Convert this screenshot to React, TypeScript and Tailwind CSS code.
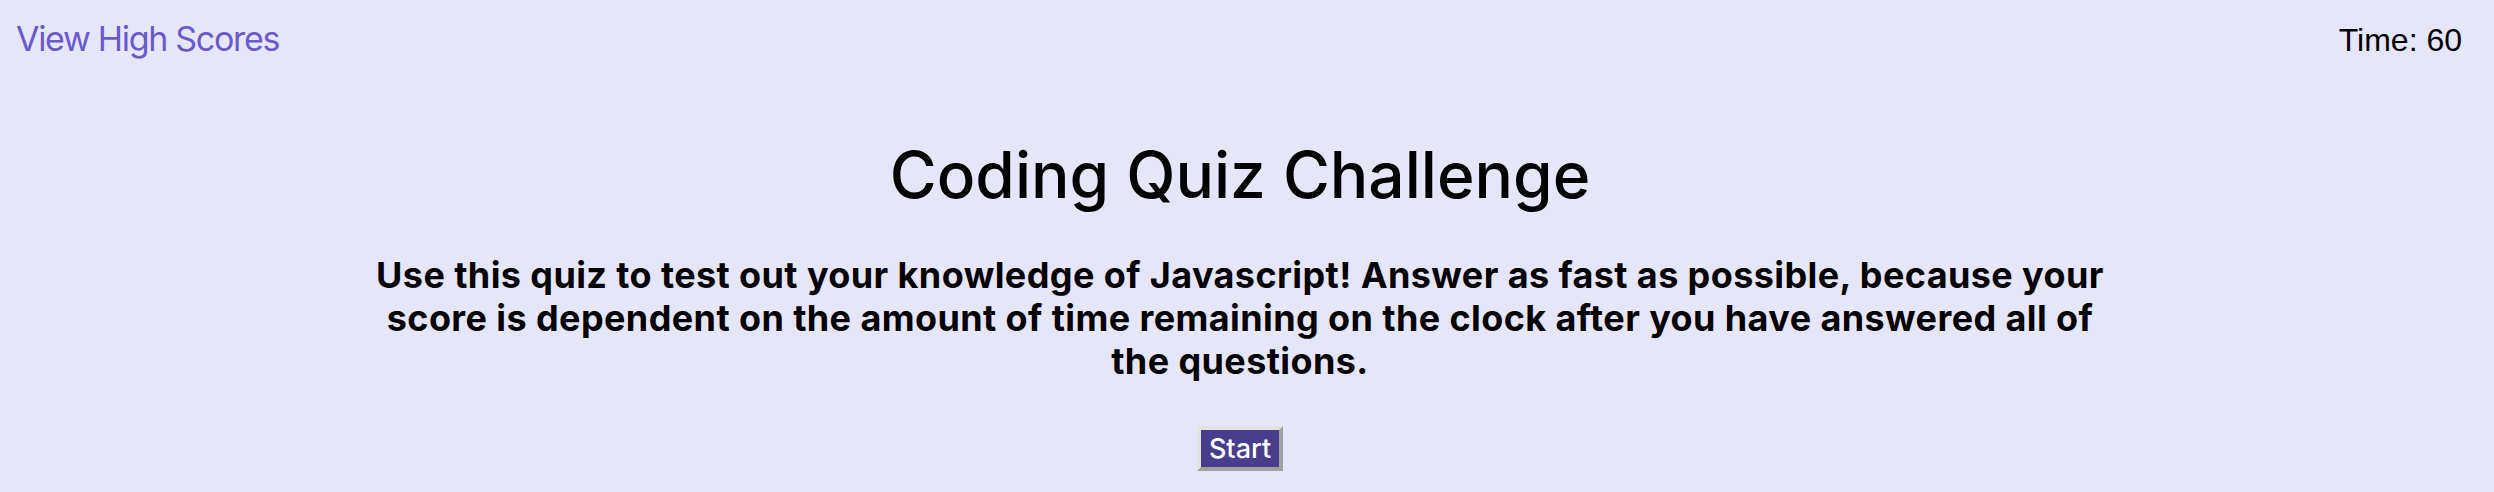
import React, { useState } from 'react';

const App: React.FC = () => {
  const [time] = useState(60);

  return (
    <div className="min-h-[492px] w-full bg-[#e6e6fa] font-['Inter','Noto_Sans',sans-serif] text-black">
      <header className="flex items-baseline justify-between pl-4 pr-8 pt-[17px]">
        <a href="#" className="text-[34px] leading-[44px] tracking-[-1.3px] text-[#6a5acd]">View High Scores</a>
        <span className="font-['Liberation_Sans',Arial,sans-serif] text-[32px] leading-[44px]">Time: {time}</span>
      </header>

      <main className="mr-[14px] flex flex-col items-center text-center">
        <h1 className="mt-[75px] text-[64px] font-medium leading-[76px]">Coding Quiz Challenge</h1>
        <p className="mt-[41px] max-w-[1752px] text-[36px] font-bold leading-[43px] tracking-[0.4px]">
          Use this quiz to test out your knowledge of Javascript! Answer as fast as possible, because your score is dependent on the amount of time remaining on the clock after you have answered all of the questions.
        </p>
        <button className="mt-[43px] flex h-[45px] w-[86px] items-center justify-center border-4 border-t-[#e3e3e3] border-l-[#e3e3e3] border-b-[#a0a0a0] border-r-[#a0a0a0] bg-[#483d8b] text-[27px] font-medium leading-none text-white">
          Start
        </button>
      </main>
    </div>
  );
};

export default App;
